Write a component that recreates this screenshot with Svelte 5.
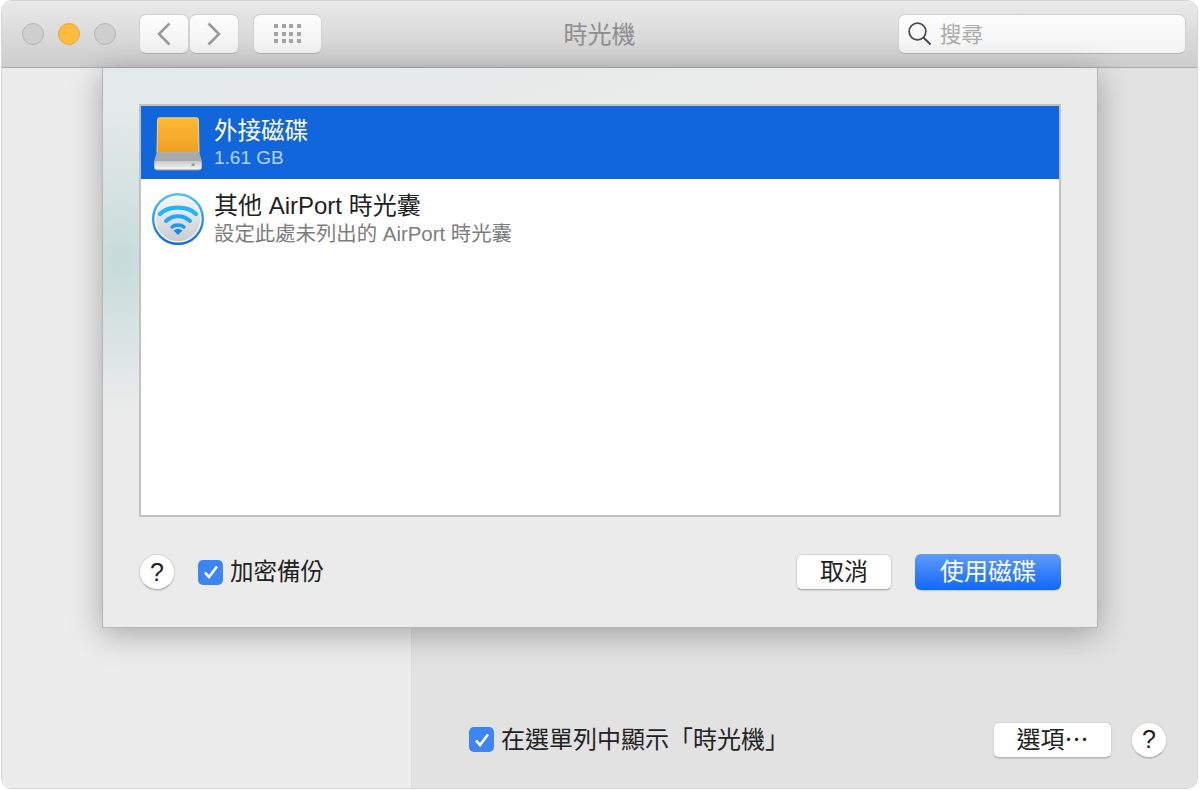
<script>
  const dots = Array.from({ length: 12 });
</script>

<div class="window">
  <header class="titlebar">
    <div class="lights">
      <span class="light"></span>
      <span class="light min"></span>
      <span class="light"></span>
    </div>
    <div class="nav">
      <button class="tool nav-btn" aria-label="back">
        <svg width="14" height="24" viewBox="0 0 14 24"><path d="M12.5 1.5 2 12l10.5 10.5" fill="none" stroke="#9a9a9a" stroke-width="2.6"/></svg>
      </button>
      <button class="tool nav-btn" aria-label="forward">
        <svg width="14" height="24" viewBox="0 0 14 24"><path d="M1.5 1.5 12 12 1.5 22.5" fill="none" stroke="#9a9a9a" stroke-width="2.6"/></svg>
      </button>
    </div>
    <button class="tool grid-btn" aria-label="show all">
      <span class="dots">
        {#each dots as _}<i></i>{/each}
      </span>
    </button>
    <div class="title">時光機</div>
    <div class="search">
      <svg width="24" height="24" viewBox="0 0 24 24"><circle cx="9.5" cy="9.5" r="8.4" fill="none" stroke="#4a4a4a" stroke-width="1.7"/><path d="M15.5 15.5l7 7" stroke="#4a4a4a" stroke-width="2" fill="none"/></svg>
      <span>搜尋</span>
    </div>
  </header>

  <main class="content">
    <aside class="sidebar"></aside>
    <section class="pane">
      <div class="pane-foot">
        <label class="check menu-check">
          <span class="box">
            <svg width="16" height="14" viewBox="0 0 16 14"><path d="M2 7.5 6 12l8-10.5" fill="none" stroke="#fff" stroke-width="2.6"/></svg>
          </span>
          <span class="label">在選單列中顯示「時光機」</span>
        </label>
        <button class="btn options">選項⋯</button>
        <button class="help">?</button>
      </div>
    </section>

    <div class="sheet">
      <div class="list">
        <div class="row selected">
          <svg class="icon" width="52" height="56" viewBox="0 0 52 56">
            <defs>
              <linearGradient id="orange" x1="0" y1="0" x2="0" y2="1"><stop offset="0" stop-color="#fdbb32"/><stop offset="1" stop-color="#ee9f25"/></linearGradient>
              <linearGradient id="silver" x1="0" y1="0" x2="0" y2="1"><stop offset="0" stop-color="#c9cacc"/><stop offset="0.6" stop-color="#e4e4e5"/><stop offset="1" stop-color="#f4f4f4"/></linearGradient>
            </defs>
            <path d="M5 36.5 5.6 3.4Q5.7 1.8 7.5 1.8h37q1.8 0 1.9 1.6L47 36.5z" fill="url(#orange)" stroke="#f4dca6" stroke-width="0.9"/>
            <path d="M4.8 36.5h42.4L50 46v5q0 3.6-3.6 3.6H5.6Q2 54.6 2 51v-5z" fill="#8f9194"/>
            <path d="M4.8 36.5h42.4L50 46H2z" fill="#a8a9ab"/>
            <rect x="2.4" y="45" width="47.2" height="8.4" rx="2.6" fill="url(#silver)"/>
            <rect x="39.6" y="47.4" width="3" height="2.6" fill="#62c46a"/>
          </svg>
          <div class="text">
            <div class="name">外接磁碟</div>
            <div class="sub">1.61 GB</div>
          </div>
        </div>
        <div class="row second">
          <svg class="icon" width="52" height="54" viewBox="0 0 52 54">
            <defs>
              <linearGradient id="disc" x1="0" y1="0" x2="0" y2="1"><stop offset="0" stop-color="#f6f6f7"/><stop offset="1" stop-color="#c8cbd0"/></linearGradient>
              <linearGradient id="ring" x1="0" y1="0" x2="0" y2="1"><stop offset="0" stop-color="#4cc4fa"/><stop offset="1" stop-color="#146ae8"/></linearGradient>
            </defs>
            <circle cx="26" cy="27" r="24.8" fill="#fff" stroke="url(#ring)" stroke-width="2.4"/>
            <circle cx="26" cy="27" r="22.4" fill="url(#disc)"/>
            <path d="M8 22C16 13.5 36 13.5 44 22" fill="none" stroke="#22b4fb" stroke-width="4.2" stroke-linecap="round"/>
            <path d="M14 29C21 22.5 31 22.5 38 29" fill="none" stroke="#1fa8fb" stroke-width="4" stroke-linecap="round"/>
            <path d="M20 35C23 32.4 29 32.4 32 35" fill="none" stroke="#1a97f6" stroke-width="3.4" stroke-linecap="round"/>
            <path d="M21.5 38.6 26 36.6l4.5 2L26 43z" fill="#1683f0"/>
          </svg>
          <div class="text">
            <div class="name">其他 AirPort 時光囊</div>
            <div class="sub">設定此處未列出的 AirPort 時光囊</div>
          </div>
        </div>
      </div>

      <div class="sheet-foot">
        <button class="help">?</button>
        <label class="check">
          <span class="box">
            <svg width="16" height="14" viewBox="0 0 16 14"><path d="M2 7.5 6 12l8-10.5" fill="none" stroke="#fff" stroke-width="2.6"/></svg>
          </span>
          <span class="label">加密備份</span>
        </label>
        <button class="btn cancel">取消</button>
        <button class="btn primary">使用磁碟</button>
      </div>
    </div>
  </main>
</div>

<style>
  :global(body) {
    background: #fff;
    font-family: "Liberation Sans", "Noto Sans CJK TC", sans-serif;
  }

  .window {
    position: relative;
    width: 1197px;
    height: 789px;
    margin-left: 1px;
    box-sizing: border-box;
    display: flex;
    flex-direction: column;
    overflow: hidden;
    border: 1px solid #d4d4d4;
    border-radius: 11px;
    color: #222;
  }

  .titlebar {
    height: 67px;
    flex: none;
    display: flex;
    align-items: center;
    box-sizing: border-box;
    padding: 0 11px 1px 20px;
    background: linear-gradient(#e9e9e9, #cdcdcd);
    border-bottom: 1px solid #acacac;
    position: relative;
  }

  .lights {
    display: flex;
    gap: 14px;
    margin-right: 23px;
  }
  .light {
    width: 22px;
    height: 22px;
    box-sizing: border-box;
    border-radius: 50%;
    background: #cfcfcf;
    border: 1px solid #b6b6b6;
  }
  .light.min {
    background: #fdbc40;
    border-color: #e6a93a;
  }

  .tool {
    height: 40px;
    box-sizing: border-box;
    padding: 0;
    display: flex;
    align-items: center;
    justify-content: center;
    background: linear-gradient(#fdfdfd, #f1f1f1);
    border: 1px solid #d2d2d2;
    border-bottom-color: #b4b4b4;
    border-radius: 7px;
  }
  .nav {
    display: flex;
    margin-right: 14px;
  }
  .nav-btn {
    width: 50px;
  }
  .grid-btn {
    width: 69px;
  }
  .dots {
    display: grid;
    grid-template-columns: repeat(4, 4px);
    grid-auto-rows: 4px;
    gap: 3.5px;
  }
  .dots i {
    background: #a3a3a3;
  }

  .title {
    position: absolute;
    left: 0;
    right: 0;
    top: 0;
    bottom: 0;
    padding-bottom: 3px;
    display: flex;
    align-items: center;
    justify-content: center;
    font-size: 24px;
    color: #8e8e8e;
    pointer-events: none;
  }

  .search {
    margin-left: auto;
    width: 288px;
    height: 40px;
    box-sizing: border-box;
    display: flex;
    align-items: center;
    gap: 8px;
    padding-left: 9px;
    background: linear-gradient(#fdfdfd, #f3f3f3);
    border: 1px solid #d0d0d0;
    border-bottom-color: #b4b4b4;
    border-radius: 7px;
    font-size: 21.5px;
    color: #ababab;
  }
  .search span {
    padding-bottom: 3px;
  }

  .content {
    position: relative;
    flex: 1;
    display: grid;
    grid-template-columns: 410px 1fr;
    min-height: 0;
  }
  .sidebar {
    background: #ececec;
    border-right: 1px solid #dcdcdc;
  }
  .pane {
    background: #e2e2e2;
    display: flex;
    align-items: flex-end;
  }
  .pane-foot {
    flex: 1;
    display: flex;
    align-items: center;
    padding: 0 30px 29px 57px;
  }
  .menu-check {
    margin-right: auto;
  }
  .options {
    width: 119px;
    margin-right: 19px;
  }

  .sheet {
    position: absolute;
    left: 100px;
    top: 0;
    width: 996px;
    height: 560px;
    box-sizing: border-box;
    padding: 36px 36px 0;
    background:
      radial-gradient(ellipse 110px 150px at 18px 192px, #c6dbda, rgba(198, 219, 218, 0) 100%),
      linear-gradient(160deg, #e3e9e9, #ebebeb 260px);
    border: 1px solid #b5b5b5;
    border-top: 0;
    box-shadow: 0 6px 30px rgba(0, 0, 0, 0.3);
  }

  .list {
    height: 413px;
    box-sizing: border-box;
    background: #fff;
    border: 2px solid #c2c2c2;
  }
  .row {
    height: 73px;
    display: flex;
    align-items: center;
    box-sizing: border-box;
    padding-left: 11px;
    gap: 10px;
  }
  .row .icon {
    flex: none;
  }
  .row.selected {
    background: #1266dc;
  }
  .row.selected .icon {
    margin-top: 2px;
  }
  .row.second {
    padding-top: 7px;
  }
  .name {
    font-size: 24px;
    line-height: 30px;
    color: #222;
  }
  .sub {
    font-size: 20.4px;
    line-height: 26px;
    color: #7d7d7d;
  }
  .selected .name {
    color: #fff;
    font-size: 23.5px;
  }
  .selected .sub {
    color: #b4d0f6;
    font-size: 19px;
    line-height: 24px;
  }

  .sheet-foot {
    display: flex;
    align-items: center;
    margin-top: 36px;
  }
  .sheet-foot .help {
    margin-right: 23px;
  }
  .sheet-foot .check {
    margin-right: auto;
    font-size: 23.5px;
  }
  .cancel {
    width: 96px;
    margin-right: 23px;
  }
  .primary {
    width: 146px;
  }

  .help {
    width: 36px;
    height: 36px;
    flex: none;
    padding: 0;
    border-radius: 50%;
    background: #fff;
    border: 1px solid #d6d6d6;
    border-bottom-color: #b2b2b2;
    box-shadow: 0 1px 1px rgba(0, 0, 0, 0.12);
    font-family: "Liberation Sans", sans-serif;
    font-size: 25px;
    line-height: 1;
    color: #222;
  }

  .btn {
    height: 36px;
    box-sizing: border-box;
    padding: 0;
    border-radius: 6px;
    background: #fff;
    border: 1px solid #d4d4d4;
    border-bottom-color: #b2b2b2;
    box-shadow: 0 1px 1px rgba(0, 0, 0, 0.1);
    font-family: inherit;
    font-size: 24px;
    line-height: 1;
    color: #222;
  }
  .primary {
    color: #fff;
    border: 0;
    background: linear-gradient(#5f9bf7, #1068fb);
    box-shadow: 0 1px 1px rgba(0, 0, 0, 0.15);
  }

  .check {
    display: flex;
    align-items: center;
    gap: 7px;
    font-size: 24px;
    color: #222;
  }
  .label {
    padding-bottom: 4px;
  }
  .box {
    width: 25px;
    height: 25px;
    flex: none;
    display: flex;
    align-items: center;
    justify-content: center;
    background: #3d85f4;
    border-radius: 5px;
  }
</style>
